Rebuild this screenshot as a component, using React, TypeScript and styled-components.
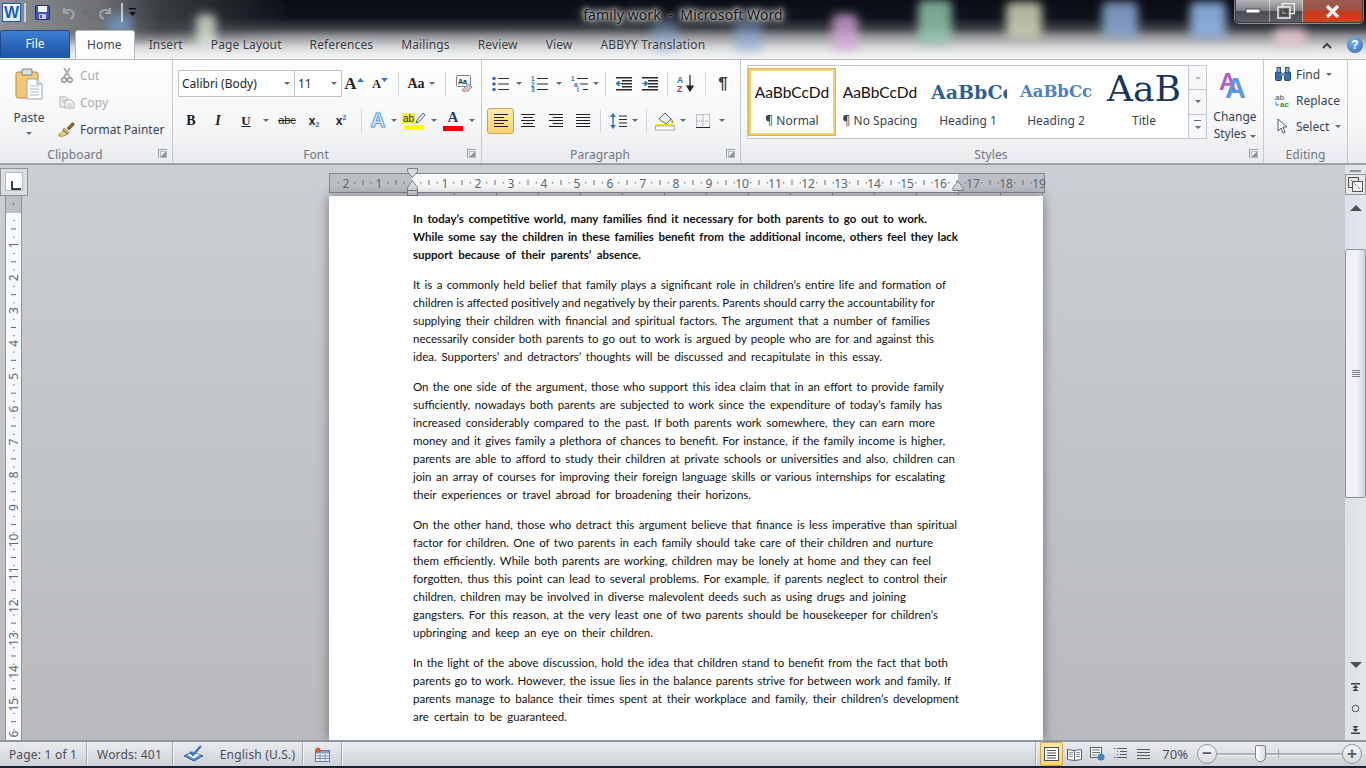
import React from "react";
import styled, { createGlobalStyle } from "styled-components";

const UI = `"Noto Sans", "Open Sans", sans-serif`;
const SERIF = `"Liberation Serif", serif`;

const GlobalStyle = createGlobalStyle`
  html, body { margin: 0; padding: 0; height: 100%; overflow: hidden; }
  body { font-family: ${UI}; font-size: 12px; color: #3c4655; }
  * { box-sizing: border-box; }
`;

const Window = styled.div`
  width: 1366px;
  height: 768px;
  display: flex;
  flex-direction: column;
  overflow: hidden;
  background: #cbced2;
`;

/* title bar + tabs share the blurred aero backdrop */
const Header = styled.header`
  position: relative;
  height: 59px;
  flex: none;
  overflow: hidden;
  background: linear-gradient(180deg, #0a0d14 0, #10141c 18px, #3c3f44 28px, #8f9193 36px, #cfd0d2 46px, #eceded 54px, #f3f4f5 59px);
`;

const LeftGlow = styled.div`
  position: absolute;
  inset: 0 auto auto 0;
  width: 290px;
  height: 46px;
  background: linear-gradient(90deg, rgba(150, 152, 155, 0.95), rgba(120, 122, 125, 0.9) 100px, rgba(70, 72, 74, 0.8) 160px, rgba(40, 40, 40, 0) 100%);
  mask-image: linear-gradient(180deg, #000 60%, transparent);
`;

const Blob = styled.div<{ $x: number; $y: number; $w: number; $h: number; $c: string }>`
  position: absolute;
  left: ${(p) => p.$x}px;
  top: ${(p) => p.$y}px;
  width: ${(p) => p.$w}px;
  height: ${(p) => p.$h}px;
  background: ${(p) => p.$c};
  border-radius: 6px;
  filter: blur(5px);
`;

const blobs = [
  { x: 108, y: 14, w: 24, h: 30, c: "rgba(120,170,225,.6)" },
  { x: 196, y: 14, w: 20, h: 34, c: "rgba(225,240,225,.75)" },
  { x: 652, y: 20, w: 26, h: 32, c: "rgba(130,170,225,.45)" },
  { x: 734, y: 20, w: 28, h: 32, c: "rgba(130,170,225,.5)" },
  { x: 832, y: 14, w: 26, h: 36, c: "rgba(215,170,220,.75)" },
  { x: 918, y: 0, w: 34, h: 44, c: "rgba(150,205,180,.8)" },
  { x: 1006, y: 2, w: 36, h: 36, c: "rgba(225,225,195,.8)" },
  { x: 1102, y: 2, w: 36, h: 36, c: "rgba(150,180,225,.8)" },
  { x: 1190, y: 2, w: 36, h: 36, c: "rgba(150,190,240,.85)" },
  { x: 1274, y: 28, w: 32, h: 18, c: "rgba(240,205,215,.75)" },
];

const Caption = styled.div`
  position: relative;
  height: 30px;
  display: grid;
  grid-template-columns: 1fr auto 1fr;
`;

const Qat = styled.div`
  display: flex;
  align-items: center;
  height: 25px;
  padding-left: 2px;
`;

const QatSlot = styled.div<{ $w: number }>`
  width: ${(p) => p.$w}px;
  display: flex;
  align-items: center;
  justify-content: center;
`;

const WordLogo = styled.div`
  width: 19px;
  height: 19px;
  background: linear-gradient(180deg, #fff, #dfeafa);
  border: 1px solid #1c5bb3;
  color: #1a5cb8;
  font: bold 16px/17px "Liberation Sans", sans-serif;
  text-align: center;
`;

const QatSep = styled.div`
  width: 2px;
  height: 19px;
  flex: none;
  background: rgba(235, 238, 240, 0.7);
`;

const Title = styled.div`
  font-size: 14px;
  line-height: 29px;
  color: #101216;
  white-space: pre;
  letter-spacing: 0.1px;
  text-shadow: 0 0 2px #c4c4c4, 0 0 4px #c4c4c4, 0 0 6px #b4b4b4, 0 0 8px #a8a8a8, 0 0 11px #9a9a9a, 0 0 14px #8a8a8a;
`;

const WinControls = styled.div`
  justify-self: end;
  margin-right: 3px;
  width: 128px;
  height: 23px;
  display: flex;
  border: 1px solid #3c4046;
  border-top: none;
  border-radius: 0 0 4px 4px;
  box-shadow: 0 0 0 1px rgba(255, 255, 255, 0.45);
  overflow: hidden;
`;

const WinButton = styled.div<{ $w: number; $close?: boolean }>`
  width: ${(p) => p.$w}px;
  display: flex;
  align-items: center;
  justify-content: center;
  border-right: ${(p) => (p.$close ? "none" : "1px solid rgba(255,255,255,.45)")};
  background: ${(p) =>
    p.$close
      ? "linear-gradient(180deg, #9a5a50 0, #a2503f 45%, #c8391a 55%, #d2431f 100%)"
      : "linear-gradient(180deg, #b4b6b8 0, #808284 48%, #4a4c50 52%, #5c5e62 100%)"};
`;

const Tabs = styled.nav`
  position: relative;
  height: 29px;
  display: flex;
  align-items: flex-end;
`;

const FileTab = styled.div`
  width: 70px;
  height: 28px;
  margin: 0 5px 1px 0;
  border-radius: 3px 3px 0 0;
  border: 1px solid #1d4c92;
  border-bottom: none;
  background: linear-gradient(180deg, #3f7fd0 0, #2a67bb 50%, #1e56a8 100%);
  color: #fff;
  line-height: 26px;
  text-align: center;
  font-size: 12px;
`;

const Tab = styled.div<{ $active?: boolean }>`
  height: ${(p) => (p.$active ? "29px" : "28px")};
  padding: ${(p) => (p.$active ? "0 12px 0 11px" : "0 14px")};
  line-height: 27px;
  font-size: 12px;
  letter-spacing: 0.13px;
  color: ${(p) => (p.$active ? "#3c4a5c" : "#3a3d42")};
  background: ${(p) => (p.$active ? "linear-gradient(180deg,#fff,#fbfcfd)" : "transparent")};
  border: ${(p) => (p.$active ? "1px solid #b4b8be" : "none")};
  border-bottom: none;
  border-radius: 3px 3px 0 0;
  text-shadow: ${(p) => (p.$active ? "none" : "0 0 4px rgba(255,255,255,.6)")};
`;

const TabEnd = styled.div`
  margin-left: auto;
  height: 28px;
  display: flex;
  align-items: center;
  gap: 15px;
  padding-right: 3px;
`;

const HelpBall = styled.div`
  width: 16px;
  height: 16px;
  border-radius: 50%;
  background: radial-gradient(circle at 40% 30%, #7fb0ee, #2d66bb);
  color: #fff;
  font: bold 12px/16px "Liberation Sans", sans-serif;
  text-align: center;
`;

const Ribbon = styled.section`
  height: 106px;
  flex: none;
  display: flex;
  border-top: 1px solid #b7bbc1;
  border-bottom: 2px solid #9ca1a8;
  background: linear-gradient(180deg, #fefefe 0, #f6f7f8 60%, #e9ebee 100%);
`;

const Group = styled.div<{ $w: number }>`
  position: relative;
  width: ${(p) => p.$w}px;
  flex: none;
  display: flex;
  flex-direction: column;
  border-right: 1px solid #c6cad0;
`;

const GroupBody = styled.div`
  flex: 1;
  display: flex;
  min-height: 0;
`;

const GroupLabel = styled.div<{ $plain?: boolean }>`
  height: 20px;
  line-height: 24px;
  padding-right: ${(p) => (p.$plain ? 0 : 22)}px;
  text-align: center;
  font-size: 12px;
  letter-spacing: 0.1px;
  color: #6d7785;
`;

const Launcher = styled.div`
  position: absolute;
  right: 5px;
  bottom: 5px;
  width: 9px;
  height: 9px;
  border: 1px solid #9aa0a8;
  border-width: 1px 0 0 1px;
  &::after {
    content: "";
    position: absolute;
    right: 0;
    bottom: 0;
    width: 5px;
    height: 5px;
    background: linear-gradient(135deg, transparent 45%, #8b919a 50%);
    border: 1px solid #b8bcc2;
  }
`;

const PasteColumn = styled.div`
  width: 58px;
  display: flex;
  flex-direction: column;
  align-items: center;
  padding-top: 8px;
  color: #3a4350;
  font-size: 12px;
`;

const PasteText = styled.div`
  margin-top: 8px;
  line-height: 20px;
`;

const CaretBox = styled.span<{ $w?: number }>`
  flex: none;
  width: ${(p) => p.$w ?? 7}px;
  display: inline-flex;
  justify-content: center;
  align-items: center;
  height: 10px;
  &::after {
    content: "";
    border-style: solid;
    border-width: 3px 3px 0;
    border-color: #626a75 transparent transparent;
  }
`;

const SmallStack = styled.div`
  padding-top: 2px;
  display: flex;
  flex-direction: column;
`;

const SmallRow = styled.div<{ $h?: number; $dim?: boolean }>`
  height: ${(p) => p.$h ?? 27}px;
  display: flex;
  align-items: center;
  gap: 5px;
  white-space: nowrap;
  color: ${(p) => (p.$dim ? "#a9adb3" : "#3a4350")};
`;

const IconCell = styled.span`
  width: 17px;
  display: inline-flex;
  justify-content: center;
`;

const TwoRows = styled.div`
  flex: 1;
  padding: 10px 0 0 5px;
  display: flex;
  flex-direction: column;
  gap: 10px;
`;

const ToolRow = styled.div`
  height: 27px;
  display: flex;
  align-items: center;
`;

const Tool = styled.div<{ $w: number; $active?: boolean }>`
  position: relative;
  width: ${(p) => p.$w}px;
  height: 26px;
  flex: none;
  display: flex;
  align-items: center;
  justify-content: center;
  border-radius: 3px;
  border: ${(p) => (p.$active ? "1px solid #c2a25c" : "none")};
  background: ${(p) => (p.$active ? "linear-gradient(180deg,#fde9a8,#fbd36e)" : "transparent")};
`;

const VSep = styled.div<{ $w: number }>`
  width: ${(p) => p.$w}px;
  height: 24px;
  flex: none;
  display: flex;
  justify-content: center;
  &::after {
    content: "";
    width: 1px;
    background: #d2d5d9;
  }
`;

const Combo = styled.div<{ $w: number }>`
  width: ${(p) => p.$w}px;
  height: 27px;
  flex: none;
  display: flex;
  align-items: center;
  justify-content: space-between;
  padding: 0 4px 0 3px;
  background: #fff;
  border: 1px solid #c0c4ca;
  margin-right: -1px;
  font-size: 12px;
  color: #24272c;
  white-space: nowrap;
`;

const Glyph = styled.span<{ $size?: number; $color?: string; $serif?: boolean; $weight?: number; $italic?: boolean; $deco?: string }>`
  font-family: ${(p) => (p.$serif ? SERIF : `"Liberation Sans", sans-serif`)};
  font-size: ${(p) => p.$size ?? 13}px;
  font-weight: ${(p) => p.$weight ?? 700};
  font-style: ${(p) => (p.$italic ? "italic" : "normal")};
  text-decoration: ${(p) => p.$deco ?? "none"};
  color: ${(p) => p.$color ?? "#1e2227"};
  line-height: 1;
`;

const CornerMark = styled.span`
  align-self: flex-start;
  margin-top: 7px;
  display: flex;
`;

const Script = styled.span<{ $up?: boolean }>`
  font: bold 7px "Liberation Sans", sans-serif;
  color: #3b6fb5;
  align-self: ${(p) => (p.$up ? "flex-start" : "flex-end")};
  margin: ${(p) => (p.$up ? "6px 0 0 0" : "0 0 6px 0")};
`;

const EffectA = styled.span`
  font: bold 20px "Liberation Sans", sans-serif;
  color: #f4f9ff;
  -webkit-text-stroke: 1px #5a9ad8;
  text-shadow: 0 0 3px #a9cdf0;
`;

const ColorPick = styled.div`
  display: flex;
  flex-direction: column;
  align-items: center;
  gap: 1px;
`;

const ColorBar = styled.div<{ $c: string }>`
  width: 20px;
  height: 5px;
  background: ${(p) => p.$c};
`;

const HighlightRow = styled.div`
  display: flex;
  align-items: flex-end;
`;

const HighlightAb = styled.span`
  font: 10px/11px "Liberation Sans", sans-serif;
  background: #f5ee3a;
  color: #2a2f35;
  padding: 0 1px;
`;

const Pilcrow = styled.span`
  font: bold 17px "Liberation Sans", sans-serif;
  color: #3b4048;
`;

const StylesRow = styled.div`
  flex: 1;
  display: flex;
  padding: 5px 0 0 6px;
`;

const Gallery = styled.div`
  width: 442px;
  height: 74px;
  display: flex;
  background: #fff;
  border: 1px solid #c4c8ce;
  padding: 2px 0 0 0;
`;

const StyleItem = styled.div<{ $selected?: boolean }>`
  width: 88px;
  height: 68px;
  flex: none;
  display: flex;
  flex-direction: column;
  align-items: center;
  overflow: hidden;
  border: ${(p) => (p.$selected ? "3px solid #f7cf6b" : "3px solid transparent")};
  outline: ${(p) => (p.$selected ? "1px solid #d9b25c" : "none")};
  outline-offset: -1px;
`;

const StylePreview = styled.div<{ $font: string; $size: number; $color: string; $bold?: boolean; $clip?: boolean; $lift?: number }>`
  height: 41px;
  width: 78px;
  display: flex;
  align-items: center;
  justify-content: ${(p) => (p.$clip ? "flex-start" : "center")};
  padding-left: ${(p) => (p.$clip ? 2 : 0)}px;
  padding-bottom: ${(p) => p.$lift ?? 0}px;
  overflow: hidden;
  white-space: nowrap;
  font-family: ${(p) => p.$font};
  font-size: ${(p) => p.$size}px;
  font-weight: ${(p) => (p.$bold ? 700 : 400)};
  color: ${(p) => p.$color};
`;

const StyleName = styled.div`
  font-size: 12px;
  line-height: 18px;
  color: #3a4350;
  white-space: nowrap;
`;

const GalleryScroll = styled.div`
  width: 18px;
  height: 74px;
  display: flex;
  flex-direction: column;
  border: 1px solid #c4c8ce;
  border-left: none;
  background: #f6f7f8;
`;

const ScrollStep = styled.div<{ $more?: boolean }>`
  flex: 1;
  display: flex;
  flex-direction: column;
  align-items: center;
  justify-content: center;
  gap: 1px;
  border-bottom: 1px solid #c4c8ce;
  &:last-child {
    border-bottom: none;
  }
  &::before {
    content: ${(p) => (p.$more ? `""` : "none")};
    width: 7px;
    height: 1px;
    background: #626a75;
  }
`;

const UpCaret = styled.span`
  border-style: solid;
  border-width: 0 3px 3px;
  border-color: transparent transparent #b4b8be;
`;

const ChangeStyles = styled.div`
  width: 50px;
  margin-left: 3px;
  display: flex;
  flex-direction: column;
  align-items: center;
  color: #3a4350;
  line-height: 17px;
`;

const StackedA = styled.div`
  position: relative;
  width: 34px;
  height: 43px;
`;

const BigA = styled.span<{ $c: string; $x: number; $y: number; $size: number }>`
  position: absolute;
  left: ${(p) => p.$x}px;
  top: ${(p) => p.$y}px;
  font: bold ${(p) => p.$size}px/1 "Liberation Sans", sans-serif;
  color: ${(p) => p.$c};
`;

const StylesCaret = styled(CaretBox)`
  margin-left: 3px;
`;

const EditStack = styled.div`
  padding: 1px 0 0 10px;
  display: flex;
  flex-direction: column;
`;

const Workspace = styled.main`
  flex: 1;
  min-height: 0;
  display: flex;
`;

const LeftRail = styled.div`
  width: 28px;
  flex: none;
  display: flex;
  flex-direction: column;
  padding: 3px 0 0 0;
  background: linear-gradient(180deg, #cbced2, #b8babd);
`;

const TabBox = styled.div`
  width: 28px;
  height: 28px;
  flex: none;
  padding: 3px 4px 4px;
  border: 1px solid #8f949b;
  background: #d9dce0;
`;

const TabInner = styled.div`
  height: 100%;
  background: #fff;
  border: 1px solid #b5b9bf;
  position: relative;
  &::after {
    content: "";
    position: absolute;
    left: 5px;
    top: 8px;
    width: 8px;
    height: 7px;
    border-left: 2px solid #3a3d42;
    border-bottom: 2px solid #3a3d42;
  }
`;

const VRulerSlot = styled.div`
  padding-left: 5px;
`;

const Center = styled.div`
  flex: 1;
  min-width: 0;
  display: flex;
  flex-direction: column;
  align-items: center;
  padding-right: 1px;
  background: linear-gradient(180deg, #cbced2, #b8babd);
`;

const RulerRow = styled.div`
  height: 31px;
  flex: none;
  width: 100%;
  display: flex;
  justify-content: center;
  padding-top: 3px;
`;

const Page = styled.article`
  width: 714px;
  flex: 1;
  min-height: 0;
  background: #fff;
  padding: 14px 0 0 84px;
  box-shadow: 0 0 11px rgba(60, 62, 66, 0.6);
  overflow: hidden;
`;

const Para = styled.p<{ $bold?: boolean }>`
  margin: 0 0 12px;
  font-family: Lato, "Noto Sans", sans-serif;
  font-size: 11.5px;
  line-height: 18px;
  font-weight: ${(p) => (p.$bold ? 700 : 400)};
  color: #111;
`;

const Line = styled.span<{ $w: number }>`
  display: block;
  width: ${(p) => p.$w}px;
  white-space: nowrap;
  text-align-last: justify;
`;

const ScrollRail = styled.aside`
  width: 21px;
  flex: none;
  display: flex;
  flex-direction: column;
  background: linear-gradient(90deg, #dde1e8, #e4e7ec);
`;

const Splitter = styled.div`
  height: 2px;
  flex: none;
  margin: 5px 5px 2px;
  background: #8e939a;
`;

const ViewBox = styled.div`
  height: 21px;
  flex: none;
  display: flex;
  align-items: center;
  justify-content: center;
  border: 1px solid #8f949b;
  background: #e6e8ec;
`;

const ArrowCell = styled.div<{ $h: number }>`
  height: ${(p) => p.$h}px;
  flex: none;
  display: flex;
  align-items: center;
  justify-content: center;
`;

const Triangle = styled.span<{ $down?: boolean }>`
  border-style: solid;
  border-width: ${(p) => (p.$down ? "6px 6px 0" : "0 6px 6px")};
  border-color: ${(p) => (p.$down ? "#4c4f54 transparent transparent" : "transparent transparent #4c4f54")};
`;

const Thumb = styled.div`
  height: 249px;
  margin: 29px 0 0 0;
  flex: none;
  border: 1px solid #8f959c;
  border-radius: 2px;
  background: linear-gradient(90deg, #eef0f4, #f1f3f6 55%, #cfd3d9);
  display: flex;
  align-items: center;
  justify-content: center;
`;

const Grip = styled.div`
  width: 8px;
  height: 7px;
  background: repeating-linear-gradient(180deg, #7c8188 0 1px, transparent 1px 2px);
`;

const Fill = styled.div`
  flex: 1;
`;

const StatusBar = styled.footer`
  height: 28px;
  flex: none;
  display: flex;
  align-items: stretch;
  border-top: 2px solid #8f959c;
  border-bottom: 2px solid #1b2430;
  background: linear-gradient(180deg, #e9ebef, #ced2d8);
  font-size: 12px;
  letter-spacing: 0.2px;
  color: #4a4f58;
`;

const StatusItem = styled.div<{ $w: number; $sep?: boolean }>`
  width: ${(p) => p.$w}px;
  flex: none;
  display: flex;
  align-items: center;
  justify-content: center;
  white-space: nowrap;
  border-right: ${(p) => (p.$sep ? "1px solid #a3a8af" : "none")};
  box-shadow: ${(p) => (p.$sep ? "1px 0 0 #f4f5f7" : "none")};
`;

const StatusRight = styled.div`
  margin-left: auto;
  display: flex;
  align-items: center;
  padding-right: 4px;
`;

const StatusSep = styled.div`
  width: 1px;
  height: 24px;
  margin-right: 4px;
  background: #a3a8af;
  box-shadow: 1px 0 0 #f4f5f7;
`;

const ViewButton = styled.div<{ $active?: boolean }>`
  width: 23px;
  height: 24px;
  display: flex;
  align-items: center;
  justify-content: center;
  border-radius: 2px;
  border: ${(p) => (p.$active ? "1px solid #d0a64e" : "none")};
  background: ${(p) => (p.$active ? "linear-gradient(180deg,#fdeaa8,#fbd46f)" : "transparent")};
`;

const Zoom = styled.span`
  width: 33px;
  flex: none;
  text-align: right;
  font-size: 13px;
  letter-spacing: 0;
  margin-right: 9px;
`;

const ZoomBall = styled.div`
  width: 20px;
  height: 20px;
  flex: none;
  border-radius: 50%;
  border: 1px solid #8f959c;
  background: linear-gradient(180deg, #f6f7f9, #d7dadf);
  color: #5b6068;
  font: bold 17px/17px "Liberation Sans", sans-serif;
  text-align: center;
`;

const ZoomTrack = styled.div`
  position: relative;
  width: 125px;
  height: 2px;
  background: #aeb2b8;
  box-shadow: 0 1px 0 #f2f3f5;
`;

const ZoomMid = styled.div`
  position: absolute;
  left: 61px;
  top: -4px;
  width: 1px;
  height: 9px;
  background: #a1a5ab;
`;

const ZoomThumb = styled.div`
  position: absolute;
  left: 38px;
  top: -8px;
  width: 11px;
  height: 17px;
  background: linear-gradient(90deg, #fff, #d9dce1);
  border: 1px solid #7d828a;
  border-radius: 2px 2px 5px 5px;
`;

const Svg: React.FC<{ w: number; h: number; children: React.ReactNode }> = ({ w, h, children }) => (
  <svg width={w} height={h} viewBox={`0 0 ${w} ${h}`} style={{ display: "block", flex: "none" }}>
    {children}
  </svg>
);

const SaveIcon = () => (
  <Svg w={15} h={15}>
    <rect x="0.5" y="0.5" width="14" height="14" rx="1" fill="#3f55b5" stroke="#232f77" />
    <rect x="3" y="1" width="9" height="6" fill="#f2f4fa" />
    <rect x="4" y="9" width="7" height="5" fill="#c8ccd8" />
    <rect x="5" y="10" width="2" height="3" fill="#3f55b5" />
  </Svg>
);

const UndoIcon = ({ flip }: { flip?: boolean }) => (
  <Svg w={15} h={14}>
    <path
      d={flip ? "M12 2v5H7M12 6C10 3 5 3 3 6c-1.500 2.500 0 6 3 7" : "M3 2v5h5M3 6c2-3 7-3 9 0 1.500 2.500 0 6-3 7"}
      fill="none"
      stroke="#a2a5a8"
      strokeWidth="2.200"
    />
  </Svg>
);

const CustomizeIcon = () => (
  <Svg w={9} h={10}>
    <rect x="1" y="0" width="7" height="1.500" fill="#0f1012" />
    <path d="M1 4h7L4.500 8z" fill="#0f1012" />
  </Svg>
);

const MinIcon = () => (
  <Svg w={16} h={10}>
    <rect x="1" y="3" width="14" height="4" fill="#fff" stroke="#4a4c50" />
  </Svg>
);

const RestoreIcon = () => (
  <Svg w={18} h={16}>
    <rect x="5.500" y="0.500" width="12" height="10" fill="none" stroke="#eee" strokeWidth="1.500" />
    <rect x="1" y="4" width="12" height="11" fill="rgba(90,92,96,.7)" stroke="#eee" strokeWidth="1.500" />
    <rect x="4" y="7" width="6" height="5" fill="none" stroke="#333" />
  </Svg>
);

const CloseIcon = () => (
  <Svg w={15} h={13}>
    <path d="M2 1l11 11M13 1L2 12" stroke="#f4f4f4" strokeWidth="3.400" />
  </Svg>
);

const ChevronUp = () => (
  <Svg w={10} h={7}>
    <path d="M1 6l4-4 4 4" fill="none" stroke="#3e4146" strokeWidth="2" />
  </Svg>
);

const PasteIcon = () => (
  <Svg w={28} h={32}>
    <rect x="1" y="4" width="22" height="26" rx="2" fill="#f3c878" stroke="#b68c47" />
    <rect x="7" y="1" width="10" height="6" rx="1" fill="#dcdee2" stroke="#7b7f87" />
    <path d="M12 11h10l5 5v15H12z" fill="#fff" stroke="#9aa3b0" />
    <path d="M22 11v5h5" fill="#dfe6ef" stroke="#9aa3b0" />
    <path d="M15 18h9M15 21h9M15 24h9M15 27h9" stroke="#a8b4c4" />
  </Svg>
);

const CutIcon = () => (
  <Svg w={12} h={15}>
    <path d="M3 0l6 9M9 0L3 9" stroke="#a4a8ad" strokeWidth="1.800" />
    <circle cx="3" cy="12" r="2.300" fill="none" stroke="#8f9398" strokeWidth="1.500" />
    <circle cx="9" cy="12" r="2.300" fill="none" stroke="#8f9398" strokeWidth="1.500" />
  </Svg>
);

const CopyIcon = () => (
  <Svg w={16} h={13}>
    <path d="M1 1h6l2 2v8H1z" fill="#eceef0" stroke="#b2b5b9" />
    <path d="M6 4h6l3 3v5H6z" fill="#f6f7f8" stroke="#a8abb0" />
    <path d="M3 4h3M3 6h2M8 8h5M8 10h5" stroke="#bcbfc3" />
  </Svg>
);

const PainterIcon = () => (
  <Svg w={17} h={15}>
    <path d="M9 6l5-5c1-1 3 1 2 2l-5 5z" fill="#8a6a34" stroke="#5b4520" strokeWidth=".6" />
    <path d="M1 12c3 0 4-3 5-6l5 4c-2 3-6 5-10 4z" fill="#f2d66c" stroke="#a88a30" />
    <path d="M5 8l5 4" stroke="#5a7fb0" strokeWidth="1.600" />
  </Svg>
);

const Corner = ({ up }: { up?: boolean }) => (
  <Svg w={7} h={4}>
    <path d={up ? "M0 4l3.500-4L7 4z" : "M0 0l3.500 4L7 0z"} fill="#3f74bd" />
  </Svg>
);

const PenIcon = () => (
  <Svg w={11} h={12}>
    <path d="M1 11l1-3 6-7 2 2-6 7z" fill="#dfe6f2" stroke="#55668a" />
  </Svg>
);

const ClearIcon = () => (
  <Svg w={18} h={17}>
    <rect x="1.500" y="0.500" width="14" height="11" rx="1" fill="#f6f7f9" stroke="#79808a" />
    <text x="3" y="8.500" fontSize="7" fontWeight="700" fontFamily="Liberation Sans" fill="#2c3036">
      Aa
    </text>
    <path d="M7 15l6-6 4 3-5 5H9z" fill="#e7b7c8" stroke="#8b98ab" />
  </Svg>
);

const BulletLines = ({ kind }: { kind: "dot" | "num" | "multi" }) => (
  <Svg w={17} h={16}>
    {[2.5, 8, 13.5].map((y, i) => {
      const indent = kind === "multi" ? i * 3 : 0;
      return (
        <g key={y}>
          {kind === "dot" ? (
            <circle cx={2} cy={y} r="1.800" fill="#3c6cb5" />
          ) : (
            <text x={indent} y={y + 2.500} fontSize="6.500" fontWeight="700" fontFamily="Liberation Sans" fill="#3c6cb5">
              {kind === "multi" ? ["1", "a", "i"][i] : i + 1}
            </text>
          )}
          <rect x={indent + 6} y={y - 0.500} width={11 - indent} height="1" fill="#2a2d31" />
        </g>
      );
    })}
  </Svg>
);

const IndentIcon = ({ inward }: { inward?: boolean }) => (
  <Svg w={16} h={15}>
    {[1, 4, 7, 10, 13].map((y) => (
      <rect key={y} x={y === 1 || y === 13 ? 0 : 6} y={y} width={y === 1 || y === 13 ? 16 : 10} height="1.500" fill="#25282c" />
    ))}
    <path d={inward ? "M0 7.500h4M3 5l3 2.500L3 10z" : "M6 7.500H2M3 5L0 7.500 3 10z"} stroke="#3970bd" fill="#3970bd" />
  </Svg>
);

const SortIcon = () => (
  <Svg w={18} h={17}>
    <text x="0" y="7.500" fontSize="8.500" fontWeight="700" fontFamily="Liberation Sans" fill="#3a6bb3">
      A
    </text>
    <text x="0" y="16.500" fontSize="8.500" fontWeight="700" fontFamily="Liberation Sans" fill="#9c3d34">
      Z
    </text>
    <path d="M13 0v14M10 11l3 5 3-5z" stroke="#222" fill="#222" strokeWidth="1.200" />
  </Svg>
);

const AlignIcon = ({ mode }: { mode: "left" | "center" | "right" | "justify" }) => {
  const rows: [number, number][] = [
    [1, 14],
    [4, 10],
    [7, 14],
    [10, 10],
    [13, 14],
  ];
  return (
    <Svg w={14} h={15}>
      {rows.map(([y, w]) => {
        const width = mode === "justify" ? 14 : w;
        const x = mode === "left" || mode === "justify" ? 0 : mode === "right" ? 14 - width : (14 - width) / 2;
        return <rect key={y} x={x} y={y} width={width} height="1" fill="#1d1f22" />;
      })}
    </Svg>
  );
};

const LineSpaceIcon = () => (
  <Svg w={17} h={16}>
    <path d="M3 0l3 4H0zM3 16l3-4H0z" fill="#3a70bd" />
    <rect x="2.300" y="3" width="1.400" height="10" fill="#3a70bd" />
    <path d="M9 3h8M9 6.500h8M9 10h8M9 13.500h8" stroke="#25282c" />
  </Svg>
);

const ShadingIcon = () => (
  <Svg w={20} h={20}>
    <path d="M4 8l6-6 6 6-5 5z" fill="#eef2f8" stroke="#59627a" />
    <path d="M16 7c2 2 3 4 2 5s-2-1-2-5z" fill="#c08a42" />
    <rect x="0.500" y="13" width="19" height="1.800" fill="#f0e818" />
    <rect x="0.500" y="15" width="19" height="4" fill="#fff" stroke="#a7abb1" />
  </Svg>
);

const BordersIcon = () => (
  <Svg w={14} h={14}>
    <rect x="0.500" y="0.500" width="13" height="13" fill="none" stroke="#8d9197" strokeDasharray="1 1" />
    <path d="M7 1v12M1 7h12" stroke="#8d9197" strokeDasharray="1 1" />
    <path d="M0 13.500h14" stroke="#25282c" />
  </Svg>
);

const FindIcon = () => (
  <Svg w={16} h={14}>
    <rect x="0.500" y="5" width="6" height="8.500" rx="1" fill="#3a6db0" stroke="#23477d" />
    <rect x="9.500" y="5" width="6" height="8.500" rx="1" fill="#3a6db0" stroke="#23477d" />
    <rect x="2" y="0.500" width="3.500" height="5" fill="#86a8d6" stroke="#35557f" />
    <rect x="10.500" y="0.500" width="3.500" height="5" fill="#86a8d6" stroke="#35557f" />
    <rect x="6" y="6" width="4" height="3" fill="#7b8fa8" />
  </Svg>
);

const ReplaceIcon = () => (
  <Svg w={17} h={15}>
    <text x="1" y="7" fontSize="8" fontFamily="Liberation Sans" fill="#4a4f55">
      ab
    </text>
    <text x="6" y="14" fontSize="8" fontWeight="700" fontFamily="Liberation Sans" fill="#3d8c3a">
      ac
    </text>
    <path d="M2 9v3h3" fill="none" stroke="#3c72bd" />
  </Svg>
);

const CursorIcon = () => (
  <Svg w={12} h={16}>
    <path d="M1 1v12l3-3 2 5 2-1-2-5h4z" fill="#fff" stroke="#4c5a6b" />
  </Svg>
);

const SpellIcon = () => (
  <Svg w={21} h={19}>
    <path d="M1 11l8-4 11 4-8 6z" fill="#4f82c9" stroke="#2f5c9e" />
    <path d="M4 10l6-2.500 7 2.500-6 3.500z" fill="#f5f7fb" />
    <path d="M2 12.500l9 5 8-5" fill="none" stroke="#f5f7fb" />
    <path d="M7 7l3 3 8-9" fill="none" stroke="#3b6fb8" strokeWidth="2.200" />
  </Svg>
);

const MacroIcon = () => (
  <Svg w={15} h={15}>
    <rect x="0.500" y="3.500" width="14" height="11" fill="#f7f9fc" stroke="#5b7cab" />
    <rect x="1" y="4" width="13" height="2.500" fill="#7ea1d2" />
    <path d="M1 9h13M1 11.500h13M5 7v7M10 7v7" stroke="#6b8cbc" />
    <circle cx="3" cy="3" r="2.600" fill="#e0533a" />
  </Svg>
);

const PageViewIcon = ({ kind }: { kind: "print" | "read" | "web" | "outline" | "draft" }) => {
  if (kind === "print")
    return (
      <Svg w={15} h={14}>
        <rect x="0.500" y="0.500" width="14" height="13" fill="#fff" stroke="#4a4d52" />
        <path d="M3 3.500h9M3 6h9M3 8.500h9M3 11h9" stroke="#4a4d52" />
      </Svg>
    );
  if (kind === "read")
    return (
      <Svg w={15} h={13}>
        <path d="M.5 1.500L7.500 2.500l7-1v10l-7 1-7-1zM7.500 2.500v10" fill="#fff" stroke="#5a5f66" />
        <path d="M2 4.500h4M2 6.500h4M2 8.500h4M9 4.500h4M9 6.500h4M9 8.500h4" stroke="#8a8f96" />
      </Svg>
    );
  if (kind === "web")
    return (
      <Svg w={15} h={14}>
        <rect x="0.500" y="0.500" width="11" height="10" fill="#fff" stroke="#5a5f66" />
        <path d="M2 3h8M2 5.500h8M2 8h5" stroke="#6b7077" />
        <circle cx="11" cy="10" r="3.500" fill="#3f7fbf" />
        <path d="M9 9c1 1 3 0 3 3z" fill="#58a84a" />
      </Svg>
    );
  if (kind === "outline")
    return (
      <Svg w={13} h={12}>
        <path d="M3 .5h10M6 3.500h7M6 6.500h7M3 9.500h10M0 .5h1.500M3 3.500h1M3 6.500h1M0 9.500h1.500" stroke="#5a5f66" />
      </Svg>
    );
  return (
    <Svg w={13} h={13}>
      <path d="M0 1.500h13M0 4.500h13M0 7.500h13M0 10.500h13" stroke="#5a5f66" />
    </Svg>
  );
};

const BrowseIcon = ({ kind }: { kind: "up" | "dot" | "down" }) => {
  if (kind === "dot")
    return (
      <Svg w={9} h={9}>
        <circle cx="4.500" cy="4.500" r="3.300" fill="none" stroke="#55585d" />
      </Svg>
    );
  return (
    <Svg w={9} h={9}>
      {kind === "up" ? (
        <path d="M0 0h9v1.400H0zM4.500 2l3 3h-6zM4.500 5l3 3h-6z" fill="#3d4045" />
      ) : (
        <path d="M0 7.600h9V9H0zM4.500 7l3-3h-6zM4.500 4l3-3h-6z" fill="#3d4045" />
      )}
    </Svg>
  );
};

const ViewRulerIcon = () => (
  <Svg w={15} h={15}>
    <rect x="0.500" y="0.500" width="10" height="10" fill="#e8e2e6" stroke="#555" />
    <rect x="4.500" y="4.500" width="10" height="10" fill="#f6f2f4" stroke="#555" />
    <path d="M3 3l9 9" stroke="#555" strokeDasharray="1 1" />
  </Svg>
);

const range = (n: number) => Array.from({ length: n }, (_, i) => i);

/* horizontal ruler: origin (0) is 83px in, one unit is 33px */
const HRuler = () => {
  const origin = 83;
  const unit = 33;
  const marks = range(22 * 4 + 2).map((i) => (i - 10) / 4);
  return (
    <svg width={714} height={28} style={{ display: "block", overflow: "visible" }}>
      <rect x="0.500" y="5.500" width="715" height="19" fill="#bcc0c5" stroke="#83888f" />
      <rect x={origin} y="6" width={546} height="18" fill="#f8f9fa" />
      {marks.map((m) => {
        const x = origin + m * unit;
        if (x < 1 || x > 714 || m === 0) return null;
        if (Number.isInteger(m)) {
          return (
            <text key={m} x={x} y={19.500} textAnchor="middle" fontSize="12" fontFamily={UI} fill="#5f6771">
              {Math.abs(m)}
            </text>
          );
        }
        if (m * 2 === Math.round(m * 2)) return <rect key={m} x={x} y={12} width="1" height="5" fill="#666b72" />;
        return <rect key={m} x={x} y={14} width="1" height="1.500" fill="#666b72" />;
      })}
      {range(15).map((i) => (
        <rect key={i} x={125 + i * 42} y={25} width="1" height="2" fill="#7b8087" />
      ))}
      <path d="M78.500 0.500h10v3l-5 6-5-6zM78.500 22.500v-3l5-7 5 7v3z" fill="#d8dadd" stroke="#7d8289" />
      <rect x="78.500" y="22.500" width="10" height="5" fill="#d8dadd" stroke="#7d8289" />
      <path d="M624 22.500v-3l5-6 5 6v3z" fill="#d8dadd" stroke="#7d8289" />
    </svg>
  );
};

const VRuler = () => {
  const unit = 32.85;
  const origin = 16;
  const marks = range(16 * 4 + 3).map((i) => i / 4);
  return (
    <svg width={17} height={545} style={{ display: "block" }}>
      <rect x="0.500" y="0" width="16" height="545" fill="#f8f9fa" stroke="#8f949b" />
      <rect x="1" y="0" width="15" height={origin + 1} fill="#bcc0c5" />
      <rect x="8" y="7" width="1" height="2" fill="#666b72" />
      {marks.map((m) => {
        const y = origin + m * unit;
        if (m === 0) return null;
        if (Number.isInteger(m)) {
          return (
            <text key={m} transform={`translate(12.500 ${y}) rotate(-90)`} textAnchor="middle" fontSize="12" fontFamily={UI} fill="#5f6771">
              {m}
            </text>
          );
        }
        if (m * 2 === Math.round(m * 2)) return <rect key={m} x={6} y={y} width="5" height="1" fill="#666b72" />;
        return <rect key={m} x={8} y={y} width="1.500" height="1" fill="#666b72" />;
      })}
    </svg>
  );
};

/* text + right edge of each line in the reference, pages keep their own breaks */
const paragraphs: { bold?: boolean; lines: [string, number][] }[] = [
  {
    bold: true,
    lines: [
      ["In today’s competitive world, many families find it  necessary for both parents to go out to work.", 927],
      ["While some say the children in these families benefit from the additional income, others feel they lack", 958],
      ["support because of their parents’ absence.", 641],
    ],
  },
  {
    lines: [
      ["It is a commonly held belief that family plays a significant role in children’s entire life and formation of", 946],
      ["children is affected positively and negatively by their parents. Parents should carry the accountability for", 931],
      ["supplying their children with financial and spiritual factors. The argument that a number of families", 930],
      ["necessarily consider both parents to go out to work is argued by people who are for and against this", 934],
      ["idea. Supporters’ and detractors’ thoughts will be discussed and recapitulate in this essay.", 882],
    ],
  },
  {
    lines: [
      ["On the one side of the argument, those who support this idea claim that  in an effort to provide family", 944],
      ["sufficiently, nowadays both parents are subjected to work since the expenditure of today’s family has", 942],
      ["increased considerably compared to the past. If both parents work somewhere, they can earn more", 935],
      ["money and it gives family a  plethora of chances to benefit. For instance, if the family income is higher,", 945],
      ["parents are able to afford to study their children at private schools or universities and also, children can", 955],
      ["join an array of courses for improving their foreign language skills or various internships for escalating", 945],
      ["their experiences or travel abroad for broadening their horizons.", 751],
    ],
  },
  {
    lines: [
      ["On the other hand, those who detract this argument believe that finance is less imperative than spiritual", 957],
      ["factor for children. One of two parents in each family should take care of their children and nurture", 933],
      ["them efficiently. While both parents are working, children may be lonely at home and they can feel", 931],
      ["forgotten, thus this point can lead to several problems. For example, if parents neglect to control their", 947],
      ["children, children may be involved in diverse malevolent deeds such as using drugs and joining", 906],
      ["gangsters. For this reason, at the very least one of two parents should be housekeeper for children’s", 938],
      ["upbringing and keep an eye on their children.", 653],
    ],
  },
  {
    lines: [
      ["In the light of the above discussion, hold the idea that children stand to benefit from the fact that both", 948],
      ["parents go to work. However, the issue lies in the balance parents strive for between work and family. If", 951],
      ["parents manage to balance their times spent at  their workplace and family, their children’s development", 959],
      ["are certain to be guaranteed.", 567],
    ],
  },
];

const styleItems = [
  { name: "¶ Normal", sample: "AaBbCcDd", font: `Lato, sans-serif`, size: 15.5, color: "#111", selected: true },
  { name: "¶ No Spacing", sample: "AaBbCcDd", font: `Lato, sans-serif`, size: 15.5, color: "#111" },
  { name: "Heading 1", sample: "AaBbCc", font: `"DejaVu Serif", serif`, size: 19, color: "#365f91", bold: true, clip: true },
  { name: "Heading 2", sample: "AaBbCc", font: `"DejaVu Serif", serif`, size: 16.5, color: "#4f81bd", bold: true },
  { name: "Title", sample: "AaB", font: `"DejaVu Serif", serif`, size: 36, color: "#17365d", clip: true, lift: 6 },
];

const App: React.FC = () => (
  <>
    <GlobalStyle />
    <Window>
      <Header>
        <LeftGlow />
        {blobs.map((b) => (
          <Blob key={b.x} $x={b.x} $y={b.y} $w={b.w} $h={b.h} $c={b.c} />
        ))}
        <Caption>
          <Qat>
            <WordLogo>W</WordLogo>
            <QatSlot $w={8}>
              <QatSep />
            </QatSlot>
            <QatSlot $w={26}>
              <SaveIcon />
            </QatSlot>
            <QatSlot $w={26}>
              <UndoIcon />
            </QatSlot>
            <QatSlot $w={8}>
              <CaretBox />
            </QatSlot>
            <QatSlot $w={32}>
              <UndoIcon flip />
            </QatSlot>
            <QatSep />
            <QatSlot $w={18}>
              <CustomizeIcon />
            </QatSlot>
          </Qat>
          <Title>family work  -  Microsoft Word</Title>
          <WinControls>
            <WinButton $w={35}>
              <MinIcon />
            </WinButton>
            <WinButton $w={33}>
              <RestoreIcon />
            </WinButton>
            <WinButton $w={60} $close>
              <CloseIcon />
            </WinButton>
          </WinControls>
        </Caption>
        <Tabs>
          <FileTab>File</FileTab>
          <Tab $active>Home</Tab>
          {["Insert", "Page Layout", "References", "Mailings", "Review", "View", "ABBYY Translation"].map((t) => (
            <Tab key={t}>{t}</Tab>
          ))}
          <TabEnd>
            <ChevronUp />
            <HelpBall>?</HelpBall>
          </TabEnd>
        </Tabs>
      </Header>

      <Ribbon>
        <Group $w={173}>
          <GroupBody>
            <PasteColumn>
              <PasteIcon />
              <PasteText>Paste</PasteText>
              <CaretBox />
            </PasteColumn>
            <SmallStack>
              <SmallRow $dim>
                <IconCell>
                  <CutIcon />
                </IconCell>
                Cut
              </SmallRow>
              <SmallRow $dim>
                <IconCell>
                  <CopyIcon />
                </IconCell>
                Copy
              </SmallRow>
              <SmallRow>
                <IconCell>
                  <PainterIcon />
                </IconCell>
                Format Painter
              </SmallRow>
            </SmallStack>
          </GroupBody>
          <GroupLabel>Clipboard</GroupLabel>
          <Launcher />
        </Group>

        <Group $w={309}>
          <GroupBody>
            <TwoRows>
              <ToolRow>
                <Combo $w={117}>
                  Calibri (Body)
                  <CaretBox />
                </Combo>
                <Combo $w={48}>
                  11
                  <CaretBox />
                </Combo>
                <Tool $w={26}>
                  <Glyph $serif $size={17}>A</Glyph>
                  <CornerMark>
                    <Corner up />
                  </CornerMark>
                </Tool>
                <Tool $w={26}>
                  <Glyph $serif $size={12}>A</Glyph>
                  <CornerMark>
                    <Corner />
                  </CornerMark>
                </Tool>
                <VSep $w={10} />
                <Tool $w={26}>
                  <Glyph $serif $size={14}>Aa</Glyph>
                </Tool>
                <CaretBox $w={6} />
                <VSep $w={20} />
                <Tool $w={18}>
                  <ClearIcon />
                </Tool>
              </ToolRow>
              <ToolRow>
                <Tool $w={26}>
                  <Glyph $serif $size={14}>B</Glyph>
                </Tool>
                <Tool $w={28}>
                  <Glyph $serif $italic $size={14}>I</Glyph>
                </Tool>
                <Tool $w={28}>
                  <Glyph $serif $size={13} $deco="underline">U</Glyph>
                </Tool>
                <CaretBox $w={12} />
                <Tool $w={30}>
                  <Glyph $size={11} $weight={400} $deco="line-through">abc</Glyph>
                </Tool>
                <Tool $w={24}>
                  <Glyph $size={12}>x</Glyph>
                  <Script>2</Script>
                </Tool>
                <Tool $w={30}>
                  <Glyph $size={12}>x</Glyph>
                  <Script $up>2</Script>
                </Tool>
                <VSep $w={10} />
                <Tool $w={24}>
                  <EffectA>A</EffectA>
                </Tool>
                <CaretBox $w={8} />
                <Tool $w={32}>
                  <ColorPick>
                    <HighlightRow>
                      <HighlightAb>ab</HighlightAb>
                      <PenIcon />
                    </HighlightRow>
                    <ColorBar $c="#ffff00" />
                  </ColorPick>
                </Tool>
                <CaretBox $w={8} />
                <Tool $w={30}>
                  <ColorPick>
                    <Glyph $serif $size={15} $color="#1f3f7c">A</Glyph>
                    <ColorBar $c="#f00000" />
                  </ColorPick>
                </Tool>
                <CaretBox $w={8} />
              </ToolRow>
            </TwoRows>
          </GroupBody>
          <GroupLabel>Font</GroupLabel>
          <Launcher />
        </Group>

        <Group $w={259}>
          <GroupBody>
            <TwoRows>
              <ToolRow>
                <Tool $w={26}>
                  <BulletLines kind="dot" />
                </Tool>
                <CaretBox $w={12} />
                <Tool $w={28}>
                  <BulletLines kind="num" />
                </Tool>
                <CaretBox $w={12} />
                <Tool $w={28}>
                  <BulletLines kind="multi" />
                </Tool>
                <CaretBox $w={6} />
                <VSep $w={12} />
                <Tool $w={26}>
                  <IndentIcon />
                </Tool>
                <Tool $w={26}>
                  <IndentIcon inward />
                </Tool>
                <VSep $w={8} />
                <Tool $w={30}>
                  <SortIcon />
                </Tool>
                <VSep $w={8} />
                <Tool $w={28}>
                  <Pilcrow>¶</Pilcrow>
                </Tool>
              </ToolRow>
              <ToolRow>
                <Tool $w={27} $active>
                  <AlignIcon mode="left" />
                </Tool>
                <Tool $w={28}>
                  <AlignIcon mode="center" />
                </Tool>
                <Tool $w={28}>
                  <AlignIcon mode="right" />
                </Tool>
                <Tool $w={26}>
                  <AlignIcon mode="justify" />
                </Tool>
                <VSep $w={8} />
                <Tool $w={28}>
                  <LineSpaceIcon />
                </Tool>
                <CaretBox $w={6} />
                <VSep $w={16} />
                <Tool $w={22}>
                  <ShadingIcon />
                </Tool>
                <CaretBox $w={14} />
                <Tool $w={26}>
                  <BordersIcon />
                </Tool>
                <CaretBox $w={12} />
              </ToolRow>
            </TwoRows>
          </GroupBody>
          <GroupLabel>Paragraph</GroupLabel>
          <Launcher />
        </Group>

        <Group $w={523}>
          <GroupBody>
            <StylesRow>
              <Gallery>
                {styleItems.map((s) => (
                  <StyleItem key={s.name} $selected={s.selected}>
                    <StylePreview $font={s.font} $size={s.size} $color={s.color} $bold={s.bold} $clip={s.clip} $lift={s.lift}>
                      {s.sample}
                    </StylePreview>
                    <StyleName>{s.name}</StyleName>
                  </StyleItem>
                ))}
              </Gallery>
              <GalleryScroll>
                <ScrollStep>
                  <UpCaret />
                </ScrollStep>
                <ScrollStep>
                  <CaretBox />
                </ScrollStep>
                <ScrollStep $more>
                  <CaretBox />
                </ScrollStep>
              </GalleryScroll>
              <ChangeStyles>
                <StackedA>
                  <BigA $c="#b45cc2" $x={1} $y={5} $size={24}>A</BigA>
                  <BigA $c="#5b97e2" $x={7} $y={9} $size={29}>A</BigA>
                </StackedA>
                <span>Change</span>
                <span>
                  Styles
                  <StylesCaret />
                </span>
              </ChangeStyles>
            </StylesRow>
          </GroupBody>
          <GroupLabel>Styles</GroupLabel>
          <Launcher />
        </Group>

        <Group $w={84}>
          <GroupBody>
            <EditStack>
              <SmallRow $h={26}>
                <IconCell>
                  <FindIcon />
                </IconCell>
                Find
                <CaretBox />
              </SmallRow>
              <SmallRow $h={26}>
                <IconCell>
                  <ReplaceIcon />
                </IconCell>
                Replace
              </SmallRow>
              <SmallRow $h={26}>
                <IconCell>
                  <CursorIcon />
                </IconCell>
                Select
                <CaretBox />
              </SmallRow>
            </EditStack>
          </GroupBody>
          <GroupLabel $plain>Editing</GroupLabel>
        </Group>
      </Ribbon>

      <Workspace>
        <LeftRail>
          <TabBox>
            <TabInner />
          </TabBox>
          <VRulerSlot>
            <VRuler />
          </VRulerSlot>
        </LeftRail>
        <Center>
          <RulerRow>
            <HRuler />
          </RulerRow>
          <Page>
            {paragraphs.map((p) => (
              <Para key={p.lines[0][0]} $bold={p.bold}>
                {p.lines.map(([text, end]) => (
                  <Line key={text} $w={end - 413}>
                    {text}
                  </Line>
                ))}
              </Para>
            ))}
          </Page>
        </Center>
        <ScrollRail>
          <Splitter />
          <ViewBox>
            <ViewRulerIcon />
          </ViewBox>
          <ArrowCell $h={25}>
            <Triangle />
          </ArrowCell>
          <Thumb>
            <Grip />
          </Thumb>
          <Fill />
          <ArrowCell $h={24}>
            <Triangle $down />
          </ArrowCell>
          <ArrowCell $h={21}>
            <BrowseIcon kind="up" />
          </ArrowCell>
          <ArrowCell $h={21}>
            <BrowseIcon kind="dot" />
          </ArrowCell>
          <ArrowCell $h={21}>
            <BrowseIcon kind="down" />
          </ArrowCell>
        </ScrollRail>
      </Workspace>

      <StatusBar>
        <StatusItem $w={87} $sep>Page: 1 of 1</StatusItem>
        <StatusItem $w={86} $sep>Words: 401</StatusItem>
        <StatusItem $w={40}>
          <SpellIcon />
        </StatusItem>
        <StatusItem $w={90} $sep>English (U.S.)</StatusItem>
        <StatusItem $w={39} $sep>
          <MacroIcon />
        </StatusItem>
        <StatusRight>
          <StatusSep />
          <ViewButton $active>
            <PageViewIcon kind="print" />
          </ViewButton>
          <ViewButton>
            <PageViewIcon kind="read" />
          </ViewButton>
          <ViewButton>
            <PageViewIcon kind="web" />
          </ViewButton>
          <ViewButton>
            <PageViewIcon kind="outline" />
          </ViewButton>
          <ViewButton>
            <PageViewIcon kind="draft" />
          </ViewButton>
          <Zoom>70%</Zoom>
          <ZoomBall>−</ZoomBall>
          <ZoomTrack>
            <ZoomMid />
            <ZoomThumb />
          </ZoomTrack>
          <ZoomBall>+</ZoomBall>
        </StatusRight>
      </StatusBar>
    </Window>
  </>
);

export default App;
